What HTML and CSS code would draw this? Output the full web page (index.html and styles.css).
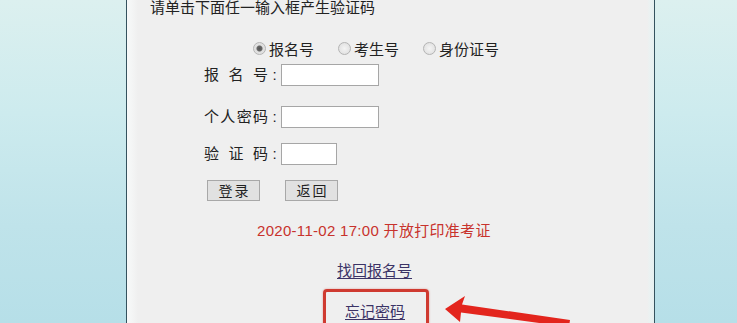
FILE: index.html
```html
<!DOCTYPE html>
<html lang="zh-CN">
<head>
<meta charset="utf-8">
<title>登录</title>
<link rel="stylesheet" href="styles.css">
</head>
<body>
<div class="panel">
  <p class="hint">请单击下面任一输入框产生验证码</p>
  <div class="radios">
    <label class="radio"><input type="radio" name="t" checked><span>报名号</span></label>
    <label class="radio"><input type="radio" name="t"><span>考生号</span></label>
    <label class="radio"><input type="radio" name="t"><span>身份证号</span></label>
  </div>
  <div class="row row-first">
    <span class="lbl">报名号</span><span class="colon">:</span><input class="field" type="text">
  </div>
  <div class="row row-second">
    <span class="lbl">个人密码</span><span class="colon">:</span><input class="field" type="password">
  </div>
  <div class="row row-third">
    <span class="lbl">验证码</span><span class="colon">:</span><input class="field field-short" type="text">
  </div>
  <div class="buttons">
    <button class="btn" type="button">登录</button>
    <button class="btn" type="button">返回</button>
  </div>
  <p class="notice">2020-11-02 17:00 开放打印准考证</p>
  <p class="link-row"><a class="link" href="#">找回报名号</a></p>
  <div class="redbox"><a class="link" href="#">忘记密码</a></div>
</div>
<svg class="arrow" width="140" height="40" viewBox="0 0 140 40">
  <polygon points="0,19 20,6 17,14.5 125,30 124,37 16,22.5 15,32" fill="#e3251d"/>
</svg>
</body>
</html>
```
FILE: styles.css
```css
html, body {
  margin: 0;
  padding: 0;
  height: 100%;
  overflow: hidden;
}
body {
  position: relative;
  background: linear-gradient(to bottom, #dcf0ef 0%, #cdebee 35%, #bfe3ea 70%, #b6dfe8 100%);
  font-family: "Liberation Sans", "Noto Sans CJK SC", sans-serif;
  font-size: 15px;
  color: #222;
}
.panel {
  margin-left: 126px;
  width: 527px;
  height: 323px;
  border-left: 1px solid #34525e;
  border-right: 1px solid #34525e;
  background: linear-gradient(to right, #f7f9f9 0, #f3f4f4 6px, #efefef 11px, #efefef 520px, #eaf2f2 523px, #e6f0f0 527px);
  overflow: hidden;
}
.hint {
  margin: -2px 0 0 23px;
  line-height: 20px;
}
.radios {
  display: flex;
  margin: 20px 0 0 126px;
  height: 20px;
  align-items: center;
  gap: 24px;
}
.radio {
  display: flex;
  align-items: center;
  gap: 3px;
}
.radio input {
  appearance: none;
  -webkit-appearance: none;
  margin: 0;
  width: 13px;
  height: 13px;
  border-radius: 50%;
  border: 1px solid #b4b4b4;
  background: radial-gradient(circle, #f4f4f4 0, #dcdcdc 100%);
  box-sizing: border-box;
}
.radio input:checked {
  background: radial-gradient(circle, #555 0, #666 2.5px, #dedede 3.5px, #e6e6e6 100%);
}
.row {
  display: flex;
  align-items: center;
  height: 22px;
  margin-left: 77px;
}
.row-first { margin-top: 6px; }
.row-second { margin-top: 20px; }
.row-third { margin-top: 15px; }
.lbl {
  display: inline-block;
  width: 64px;
  text-align: justify;
  text-align-last: justify;
  line-height: 20px;
}
.colon {
  display: inline-block;
  width: 13px;
  text-align: center;
  line-height: 20px;
}
.field {
  box-sizing: border-box;
  width: 98px;
  height: 22px;
  margin: 0;
  padding: 0 2px;
  border: 1px solid #a6a6a6;
  background: #fff;
  outline: none;
}
.field-short {
  width: 56px;
}
.buttons {
  display: flex;
  gap: 25px;
  margin: 15px 0 0 80px;
}
.btn {
  box-sizing: border-box;
  width: 53px;
  height: 21px;
  margin: 0;
  padding: 0 0 0 2px;
  border: 1px solid #a8a8a8;
  background: #e1e1e1;
  font-family: "Noto Sans CJK SC", sans-serif;
  font-size: 14px;
  letter-spacing: 2px;
  line-height: 19px;
  color: #222;
}
.notice {
  margin: 20px 0 0 130px;
  line-height: 20px;
  color: #c8322c;
  letter-spacing: 0.3px;
}
.link-row {
  margin: 20px 0 0 210px;
  line-height: 20px;
}
.link {
  color: #3b3366;
  text-decoration: underline;
  text-underline-offset: 2px;
}
.redbox {
  box-sizing: border-box;
  margin: 8px 0 0 196px;
  width: 106px;
  height: 50px;
  padding: 10px 0 0 19px;
  line-height: 20px;
  border: 3px solid #cf3a30;
  border-radius: 4px;
  box-shadow: 0 0 2px rgba(207, 58, 48, 0.5);
}
.arrow {
  position: absolute;
  left: 445px;
  top: 290px;
}
```
